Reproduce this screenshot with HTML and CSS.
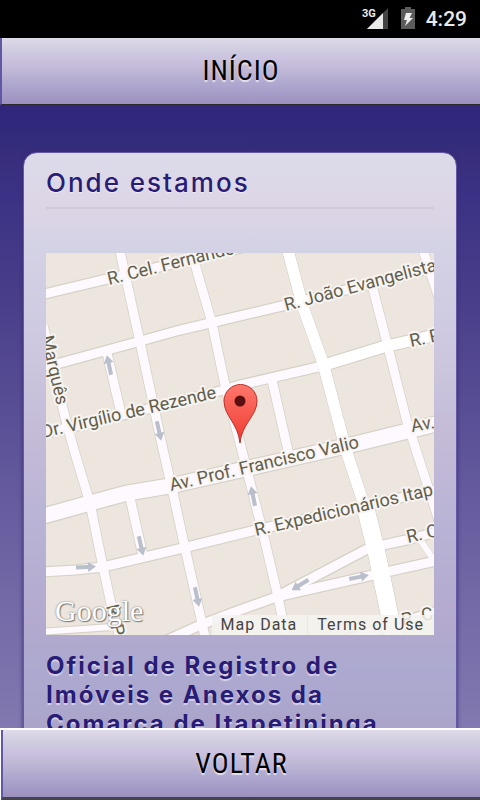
FILE: index.html
```html
<!DOCTYPE html>
<html lang="pt-BR">
<head>
<meta charset="utf-8">
<meta name="viewport" content="width=device-width, initial-scale=1">
<title>Onde estamos</title>
<link rel="stylesheet" href="styles.css">
</head>
<body>
<div class="status">
  <svg class="signal" viewBox="0 0 28 24" aria-hidden="true">
    <path d="M27 2V23H6Z" fill="#414443"/>
    <path d="M22 7V23H6Z" fill="#e9e9e9"/>
    <text x="1" y="11">3G</text>
  </svg>
  <svg class="battery" viewBox="0 0 14 22" aria-hidden="true">
    <path d="M4 0H10V2H14V22H0V2H4Z" fill="#5b5b5b"/>
    <path d="M5 6H11L8.500 11H12L4 19L6 13H3Z" fill="#f0f0f0"/>
  </svg>
  <time class="clock">4:29</time>
</div>
<header class="top"><button class="bar" type="button">INÍCIO</button></header>
<main class="page">
  <article class="card">
    <h1 class="title">Onde estamos</h1>
    <div class="map">
      <svg class="streets" viewBox="46 253 388 382" role="img" aria-label="Mapa">
        <defs>
          <linearGradient id="red" x1="0" y1="0" x2="0" y2="1">
            <stop offset="0" stop-color="#ff776b"/>
            <stop offset="1" stop-color="#ee3a30"/>
          </linearGradient>
          <g id="roads">
            <path class="w9" d="M40 295L107 279L245 247"/>
            <path class="w9" d="M40 367L60 363L137 342L180 330L210 323L286 305L440 266"/>
            <path class="w9" d="M40 434L90 423L220 391L240 385L318 367"/>
            <path class="w11" d="M318 367L383 347L440 334"/>
            <path class="w15" d="M40 517L90 503L127 493L170 486L236 471L359 443L440 423"/>
            <path class="w9" d="M40 572L75 570L103 567L183 548L256 530L440 489"/>
            <path class="w6" d="M40 632L112 627"/>
            <path class="w9" d="M165 641L203 624L240 610L276 597L369 548L406 540L440 531"/>
            <path class="w9" d="M276 597L373 575L440 560"/>
            <path class="w6" d="M419 538L433 559"/>
            <path class="w9" d="M345 640L400 623L440 610"/>
            <path class="w9" d="M119 247L140 342L162 445L173 493L185 548L206 641"/>
            <path class="w9" d="M190 247L212 323L225 385L240 443L263 533L278 597L287 641"/>
            <path class="w11" d="M287 247L303 307L323 363L346 450L368 517"/>
            <path class="w17" d="M366 510L376 550L395 641"/>
            <path class="w9" d="M372 285L388 347L407 422L440 524"/>
            <path class="w9" d="M422 247L440 301"/>
            <path class="w9" d="M272 380L289 455"/>
            <path class="w9" d="M107 353L122 418"/>
            <path class="w9" d="M43 325L65 417L74 450L90 503L103 567L113 613L121 641"/>
            <path class="w9" d="M130 498L143 556"/>
          </g>
          <path id="way" d="M-10 -2H2V-5L10 0L2 5V2H-10Z"/>
        </defs>
        <rect class="land" x="46" y="253" width="388" height="382"/>
        <use href="#roads" class="edge"/>
        <use href="#roads" class="lane"/>
        <g class="main-road">
          <path class="w11" d="M318 367L383 347L440 334"/>
          <path class="w11" d="M287 247L303 307L323 363L346 450L368 517"/>
          <path class="w17" d="M366 510L376 550L395 641"/>
        </g>
        <g class="arrows">
          <use href="#way" transform="translate(109 365) rotate(-102)"/>
          <use href="#way" transform="translate(159 431) rotate(77)"/>
          <use href="#way" transform="translate(141 546) rotate(77)"/>
          <use href="#way" transform="translate(86 567) rotate(-3)"/>
          <use href="#way" transform="translate(197 597) rotate(78)"/>
          <use href="#way" transform="translate(253 496) rotate(-102)"/>
          <use href="#way" transform="translate(300 585) rotate(148)"/>
          <use href="#way" transform="translate(359 577) rotate(-12)"/>
        </g>
        <g class="labels">
          <text transform="translate(109 285) rotate(-14)">R. Cel. Fernando</text>
          <text transform="translate(286 311) rotate(-15)">R. João Evangelista</text>
          <text transform="translate(411 347) rotate(-12)">R. Ped</text>
          <text transform="translate(43 438) rotate(-13)">Dr. Virgílio de Rezende</text>
          <text transform="translate(171 491) rotate(-13)">Av. Prof. Francisco Valio</text>
          <text transform="translate(412 432) rotate(-10)">Av. Prof</text>
          <text transform="translate(256 536) rotate(-13)">R. Expedicionários Itap</text>
          <text transform="translate(408 543) rotate(-13)">R. Cel</text>
          <text transform="translate(403 626) rotate(-13)">R. C</text>
          <text transform="translate(41 337) rotate(77)">Marquês</text>
          <text transform="translate(106 606) rotate(77)">R. P</text>
          <text transform="translate(208 641) rotate(77)">R</text>
        </g>
        <path class="pin" d="M240 443C238 423 224 416 224 401A16.500 16.500 0 0 1 257 401C257 416 242 423 240 443Z"/>
        <circle cx="240" cy="401" r="5.500" fill="#5a1010"/>
      </svg>
      <span class="logo">Google</span>
      <div class="legal"><a href="#data">Map Data</a><a href="#terms">Terms of Use</a></div>
    </div>
    <h2 class="office">Oficial de Registro de Imóveis e Anexos da Comarca de Itapetininga</h2>
  </article>
</main>
<footer class="bottom"><button class="bar" type="button">VOLTAR</button></footer>
</body>
</html>
```
FILE: styles.css
```css
* { box-sizing: border-box; }

body {
  margin: 0;
  height: 100vh;
  display: flex;
  flex-direction: column;
  overflow: hidden;
  background: #30267c;
  font-family: Inter, "Open Sans", sans-serif;
}

.status {
  flex: none;
  height: 38px;
  padding: 0 13px;
  display: flex;
  align-items: center;
  justify-content: flex-end;
  background: #000;
  color: #e9e9e9;
  font-family: Roboto, sans-serif;
}
.signal { width: 28px; height: 24px; margin-bottom: 4px; margin-top: 2px; }
.signal text { font-size: 11px; font-weight: 700; fill: #e9e9e9; }
.battery { width: 14px; height: 22px; margin: 0 11px 2px 12px; }
.clock { font-size: 21px; font-weight: 500; line-height: 38px; }

.top, .bottom { flex: none; display: flex; }
.bar {
  flex: 1;
  height: 67px;
  padding: 0;
  border: 0;
  border-left: 2px solid #6157a4;
  border-bottom: 1px solid #2b2b2f;
  border-radius: 0;
  background: linear-gradient(#dfdae9, #cecbdf 20%, #cbc2df 32%, #bfb7d5 50%, #b0a9cf 68%, #9c90c0);
  color: #000;
  font-family: "Liberation Sans Narrow", "Roboto Condensed", Roboto, sans-serif;
  font-size: 28px;
  line-height: 32px;
  letter-spacing: 1px;
  text-shadow: 0 2px 1px #e6e1f0;
}
.bottom { padding-left: 1px; background: #fff; border-top: 2px solid #fff; }
.bottom .bar { height: 70px; border-bottom: 3px solid #45434b; }

.page {
  flex: 1;
  min-height: 0;
  overflow: hidden;
  padding: 47px 23px 0;
  background: linear-gradient(#30267c, #302b7b 5%, #392e7d 9%, #3b3285 14%, #483d89 30%, #5b5197 52%, #7268a6 78%, #8279b0);
}
.card {
  padding: 12px 22px 24px;
  border: 1px solid #6559a6;
  border-radius: 14px;
  background: linear-gradient(#dcdbe9, #ddd5e6 9%, #d4d2e5 15%, #cdc8e0 32%, #c3bad6 48%, #b8b3d5 62%, #b3a9ce 78%, #aca9d0 85%, #aba2c6);
  box-shadow: 0 0 4px #392c73;
  color: #281c76;
}
.title {
  margin: 0 0 44px;
  padding-bottom: 6px;
  border-bottom: 2px solid #cfcbd6;
  font-size: 26px;
  font-weight: 500;
  line-height: 36px;
  letter-spacing: 2px;
  text-shadow: 0 1px 1px #f1edf6;
}
.map { position: relative; }
.streets { display: block; width: 100%; height: auto; }
.land { fill: #ede6df; }
.w6 { stroke-width: 6px; }
.w9 { stroke-width: 9px; }
.w11 { stroke-width: 11px; }
.w15 { stroke-width: 15px; }
.w17 { stroke-width: 17px; }
.edge { fill: none; stroke: #d5d1c5; filter: drop-shadow(1px 1px 0 #d5d1c5) drop-shadow(-1px -1px 0 #d5d1c5); }
.lane { fill: none; stroke: #fdf9fe; }
.main-road { fill: none; stroke: #fff; }
.arrows { fill: #b9bfcb; }
.labels {
  fill: #625e4b;
  stroke: #f8f4f2;
  stroke-width: 4px;
  stroke-linejoin: round;
  paint-order: stroke;
  font-family: Roboto, sans-serif;
  font-size: 18px;
}
.pin { fill: url(#red); stroke: #b8322b; stroke-width: 1px; }
.logo {
  position: absolute;
  left: 9px;
  bottom: 6px;
  color: #fff;
  font-family: "Liberation Serif", serif;
  font-size: 30px;
  line-height: 36px;
  text-shadow: 0 0 2px #777, 1px 1px 1px #777;
}
.legal {
  position: absolute;
  right: 0;
  bottom: 0;
  display: flex;
  gap: 1px;
}
.legal a {
  padding: 0 10px 0 9px;
  background: rgba(245, 243, 240, 0.85);
  color: #444;
  font-family: Roboto, sans-serif;
  font-size: 16px;
  line-height: 20px;
  letter-spacing: 1px;
  text-decoration: none;
}
.office {
  margin: 16px 0 0;
  font-size: 24px;
  font-weight: 700;
  line-height: 29px;
  letter-spacing: 2px;
  text-shadow: 0 2px 1px #d8d3e8;
}
```
